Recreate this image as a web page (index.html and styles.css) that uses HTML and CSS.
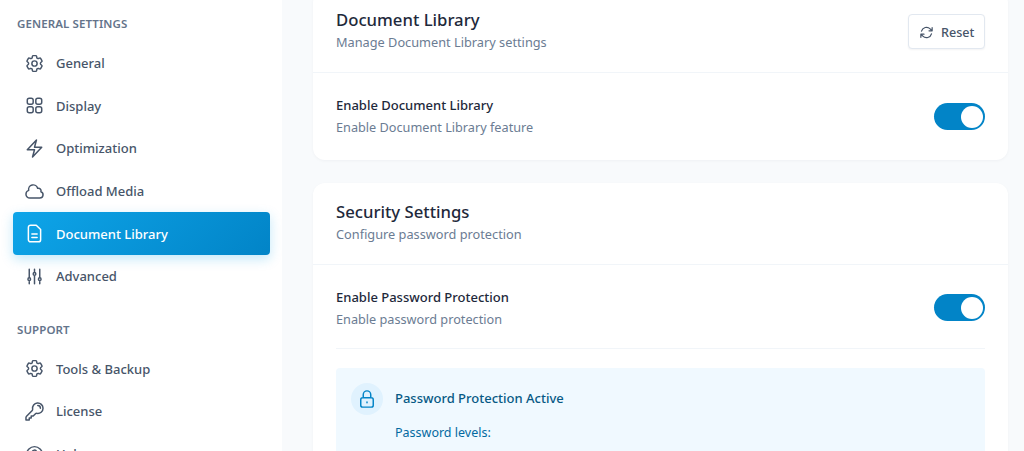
FILE: index.html
```html
<!DOCTYPE html>
<html lang="en">
<head>
<meta charset="utf-8">
<title>Document Library settings</title>
<link rel="stylesheet" href="styles.css">
</head>
<body>
<div class="app">
  <aside class="sidebar">
    <section class="nav-group">
      <h2 class="nav-heading">General Settings</h2>
      <a class="nav-item"><svg class="icon" viewBox="0 0 24 24"><path d="M9.594 3.94c.09-.542.56-.94 1.11-.94h2.593c.55 0 1.02.398 1.11.94l.213 1.281c.063.374.313.686.645.87.074.04.147.083.22.127.324.196.72.257 1.075.124l1.217-.456a1.125 1.125 0 0 1 1.37.49l1.296 2.247a1.125 1.125 0 0 1-.26 1.431l-1.003.827c-.293.24-.438.613-.431.992a6.759 6.759 0 0 1 0 .255c-.007.378.138.75.43.99l1.005.828c.424.35.534.954.26 1.43l-1.298 2.247a1.125 1.125 0 0 1-1.369.491l-1.217-.456c-.355-.133-.75-.072-1.076.124a6.57 6.57 0 0 1-.22.128c-.331.183-.581.495-.644.869l-.213 1.28c-.09.543-.56.941-1.11.941h-2.594c-.55 0-1.02-.398-1.11-.94l-.213-1.281c-.062-.374-.312-.686-.644-.87a6.52 6.52 0 0 1-.22-.127c-.325-.196-.72-.257-1.076-.124l-1.217.456a1.125 1.125 0 0 1-1.369-.49l-1.297-2.247a1.125 1.125 0 0 1 .26-1.431l1.004-.827c.292-.24.437-.613.43-.992a6.932 6.932 0 0 1 0-.255c.007-.378-.138-.75-.43-.99l-1.004-.828a1.125 1.125 0 0 1-.26-1.43l1.297-2.247a1.125 1.125 0 0 1 1.37-.491l1.216.456c.356.133.751.072 1.076-.124.072-.044.146-.087.22-.128.332-.183.582-.495.644-.869l.214-1.281z"/><path d="M15 12a3 3 0 1 1-6 0 3 3 0 0 1 6 0z"/></svg><span>General</span></a>
      <a class="nav-item"><svg class="icon" viewBox="0 0 24 24"><path d="M3.75 6A2.25 2.25 0 0 1 6 3.75h2.25A2.25 2.25 0 0 1 10.5 6v2.25a2.25 2.25 0 0 1-2.25 2.25H6a2.25 2.25 0 0 1-2.25-2.25V6zM3.75 15.75A2.25 2.25 0 0 1 6 13.5h2.25a2.25 2.25 0 0 1 2.25 2.25V18a2.25 2.25 0 0 1-2.25 2.25H6A2.25 2.25 0 0 1 3.75 18v-2.25zM13.5 6a2.25 2.25 0 0 1 2.25-2.25H18A2.25 2.25 0 0 1 20.25 6v2.25A2.25 2.25 0 0 1 18 10.5h-2.25a2.25 2.25 0 0 1-2.25-2.25V6zM13.5 15.75a2.25 2.25 0 0 1 2.25-2.25H18a2.25 2.25 0 0 1 2.25 2.25V18A2.25 2.25 0 0 1 18 20.25h-2.25A2.25 2.25 0 0 1 13.5 18v-2.25z"/></svg><span>Display</span></a>
      <a class="nav-item"><svg class="icon" viewBox="0 0 24 24"><path d="M3.75 13.5l10.5-11.25L12 10.5h8.25L9.75 21.75 12 13.5H3.75z"/></svg><span>Optimization</span></a>
      <a class="nav-item"><svg class="icon" viewBox="0 0 24 24"><path d="M2.25 15a4.5 4.5 0 0 0 4.5 4.5H18a3.75 3.75 0 0 0 1.332-7.257 3 3 0 0 0-3.758-3.848 5.25 5.25 0 0 0-10.233 2.33A4.5 4.5 0 0 0 2.25 15z"/></svg><span>Offload Media</span></a>
      <a class="nav-item nav-item-active"><svg class="icon" viewBox="0 0 24 24"><path d="M14 2.5H7.5A2.5 2.5 0 0 0 5 5v14a2.5 2.5 0 0 0 2.5 2.5h9A2.5 2.5 0 0 0 19 19V7.5z"/><path d="M9 12.5h6M9 16.5h6"/></svg><span>Document Library</span></a>
      <a class="nav-item"><svg class="icon" viewBox="0 0 24 24"><path d="M6 13.5V3.75m0 9.75a1.5 1.5 0 0 1 0 3m0-3a1.5 1.5 0 0 0 0 3m0 3.75V16.5m12-3V3.75m0 9.75a1.5 1.5 0 0 1 0 3m0-3a1.5 1.5 0 0 0 0 3m0 3.75V16.5m-6-9V3.75m0 3.75a1.5 1.5 0 0 1 0 3m0-3a1.5 1.5 0 0 0 0 3m0 9.75V10.5"/></svg><span>Advanced</span></a>
    </section>
    <section class="nav-group">
      <h2 class="nav-heading">Support</h2>
      <a class="nav-item"><svg class="icon" viewBox="0 0 24 24"><path d="M9.594 3.94c.09-.542.56-.94 1.11-.94h2.593c.55 0 1.02.398 1.11.94l.213 1.281c.063.374.313.686.645.87.074.04.147.083.22.127.324.196.72.257 1.075.124l1.217-.456a1.125 1.125 0 0 1 1.37.49l1.296 2.247a1.125 1.125 0 0 1-.26 1.431l-1.003.827c-.293.24-.438.613-.431.992a6.759 6.759 0 0 1 0 .255c-.007.378.138.75.43.99l1.005.828c.424.35.534.954.26 1.43l-1.298 2.247a1.125 1.125 0 0 1-1.369.491l-1.217-.456c-.355-.133-.75-.072-1.076.124a6.57 6.57 0 0 1-.22.128c-.331.183-.581.495-.644.869l-.213 1.28c-.09.543-.56.941-1.11.941h-2.594c-.55 0-1.02-.398-1.11-.94l-.213-1.281c-.062-.374-.312-.686-.644-.87a6.52 6.52 0 0 1-.22-.127c-.325-.196-.72-.257-1.076-.124l-1.217.456a1.125 1.125 0 0 1-1.369-.49l-1.297-2.247a1.125 1.125 0 0 1 .26-1.431l1.004-.827c.292-.24.437-.613.43-.992a6.932 6.932 0 0 1 0-.255c.007-.378-.138-.75-.43-.99l-1.004-.828a1.125 1.125 0 0 1-.26-1.43l1.297-2.247a1.125 1.125 0 0 1 1.37-.491l1.216.456c.356.133.751.072 1.076-.124.072-.044.146-.087.22-.128.332-.183.582-.495.644-.869l.214-1.281z"/><path d="M15 12a3 3 0 1 1-6 0 3 3 0 0 1 6 0z"/></svg><span>Tools &amp; Backup</span></a>
      <a class="nav-item"><svg class="icon" viewBox="0 0 24 24"><path d="M15.75 5.25a3 3 0 0 1 3 3m3 0a6 6 0 0 1-7.029 5.912c-.563-.097-1.159.026-1.563.43L10.5 17.25H8.25v2.25H6v2.25H2.25v-2.818c0-.597.237-1.169.659-1.591l6.499-6.499c.404-.404.527-1 .43-1.563A6 6 0 1 1 21.75 8.25z"/></svg><span>License</span></a>
      <a class="nav-item"><svg class="icon" viewBox="0 0 24 24"><path d="M21 12a9 9 0 1 1-18 0 9 9 0 0 1 18 0z"/><path d="M9.5 9.5a2.5 2.5 0 1 1 3.5 2.3c-.7.3-1 .8-1 1.5M12 17h.01"/></svg><span>Help</span></a>
    </section>
  </aside>
  <main class="content">
    <section class="card">
      <header class="card-header">
        <div class="card-head-text">
          <h1 class="card-title">Document Library</h1>
          <p class="card-sub">Manage Document Library settings</p>
        </div>
        <button class="reset-btn"><svg class="icon-sm" viewBox="0 0 24 24"><path d="M16.023 9.348h4.992v-.001M2.985 19.644v-4.992m0 0h4.992m-4.993 0 3.181 3.183a8.25 8.25 0 0 0 13.803-3.7M4.031 9.865a8.25 8.25 0 0 1 13.803-3.7l3.181 3.182m0-4.991v4.99"/></svg><span>Reset</span></button>
      </header>
      <div class="card-body">
        <div class="setting">
          <div class="setting-text">
            <div class="setting-title">Enable Document Library</div>
            <div class="setting-sub">Enable Document Library feature</div>
          </div>
          <div class="toggle"><span class="knob"></span></div>
        </div>
      </div>
    </section>
    <section class="card">
      <header class="card-header">
        <div class="card-head-text">
          <h1 class="card-title">Security Settings</h1>
          <p class="card-sub">Configure password protection</p>
        </div>
      </header>
      <div class="card-body">
        <div class="setting setting-divided">
          <div class="setting-text">
            <div class="setting-title">Enable Password Protection</div>
            <div class="setting-sub">Enable password protection</div>
          </div>
          <div class="toggle"><span class="knob"></span></div>
        </div>
        <div class="notice">
          <div class="notice-head">
            <span class="notice-icon"><svg class="icon-lock" viewBox="0 0 24 24"><path d="M16.5 10.5V6.75a4.5 4.5 0 1 0-9 0v3.75m-.75 11.25h10.5a2.25 2.25 0 0 0 2.25-2.25v-6.75a2.25 2.25 0 0 0-2.25-2.25H6.75a2.25 2.25 0 0 0-2.25 2.25v6.75a2.25 2.25 0 0 0 2.25 2.25z"/><path d="M12 15.5v1"/></svg></span>
            <span class="notice-title">Password Protection Active</span>
          </div>
          <p class="notice-text">Password levels:</p>
        </div>
      </div>
    </section>
  </main>
</div>
</body>
</html>
```

FILE: styles.css
```css
* { box-sizing: border-box; }
html, body { margin: 0; height: 451px; overflow: hidden; }
body { font-family: "Noto Sans", sans-serif; background: #f8fafc; color: #1e293b; }
.app { display: flex; height: 451px; overflow: hidden; }
.sidebar { width: 282px; flex: none; background: #fff; padding: 15px 12px 0 13px; }
.nav-group + .nav-group { margin-top: 23px; }
.nav-heading { margin: 0 0 10px 4px; height: 17px; font-size: 11.5px; line-height: 17px; font-weight: 600; letter-spacing: .1px; text-transform: uppercase; color: #64748b; }
.nav-item { display: flex; align-items: center; gap: 11px; height: 42.6px; padding-left: 11px; border-radius: 4px; font-size: 13px; font-weight: 500; color: #475569; }
.icon { width: 21px; height: 21px; flex: none; fill: none; stroke: currentColor; stroke-width: 1.7; stroke-linecap: round; stroke-linejoin: round; }
.nav-item-active { color: #fff; background: linear-gradient(135deg, #0ea5e9, #0284c7); box-shadow: 0 4px 12px rgba(14, 165, 233, .25); }
.content { flex: 1; min-width: 0; padding: 0 16px 0 31px; margin-top: -9px; }
.card { background: #fff; border-radius: 12px; box-shadow: 0 1px 3px rgba(15, 23, 42, .04); margin-bottom: 23px; }
.card-header { display: flex; justify-content: space-between; align-items: center; height: 82px; padding: 0 23px; border-bottom: 1px solid #f1f5f9; }
.card-head-text { padding-bottom: 3px; }
.card-title { margin: 0; font-size: 16.7px; line-height: 24px; font-weight: 500; color: #1e293b; }
.card-sub { margin: 0; font-size: 12.75px; line-height: 20px; color: #6b7c93; }
.reset-btn { display: flex; align-items: center; gap: 7px; width: 77px; height: 35px; padding: 2px 0 0 10px; background: #fff; border: 1px solid #e2e8f0; border-radius: 4px; box-shadow: 0 1px 2px rgba(15, 23, 42, .05); font: 500 12.6px "Noto Sans", sans-serif; color: #475569; }
.icon-sm { width: 15px; height: 15px; flex: none; fill: none; stroke: currentColor; stroke-width: 2; stroke-linecap: round; stroke-linejoin: round; }
.card-body { padding: 0 23px; }
.setting { display: flex; justify-content: space-between; align-items: center; height: 87px; }
.setting-text { padding-bottom: 2px; }
.setting-divided { height: 84px; border-bottom: 1px solid #f1f5f9; }
.setting-divided .setting-text { padding: 2px 0 0; }
.setting-divided .toggle { margin-top: 2px; }
.setting-title { font-size: 13px; line-height: 20px; font-weight: 500; color: #1e293b; }
.setting-sub { margin-top: 2px; font-size: 12.7px; line-height: 20px; color: #6b7c93; }
.toggle { display: flex; align-items: center; justify-content: flex-end; width: 51px; height: 27px; padding-right: 2px; border-radius: 14px; background: #0284c7; }
.knob { width: 22px; height: 22px; border-radius: 50%; background: #fff; }
.notice { margin-top: 19px; height: 120px; padding: 15px; background: #f0f9ff; border-radius: 4px; }
.notice-head { display: flex; align-items: center; gap: 12px; }
.notice-icon { display: flex; align-items: center; justify-content: center; width: 32px; height: 32px; border-radius: 50%; background: #e0f2fe; }
.icon-lock { width: 20px; height: 20px; fill: none; stroke: #0284c7; stroke-width: 1.75; stroke-linecap: round; stroke-linejoin: round; }
.notice-title { padding-bottom: 2px; font-size: 13px; line-height: 30px; font-weight: 500; color: #075985; }
.notice-text { margin: 8px 0 0 44px; font-size: 12.5px; line-height: 20px; color: #0369a1; }
```
